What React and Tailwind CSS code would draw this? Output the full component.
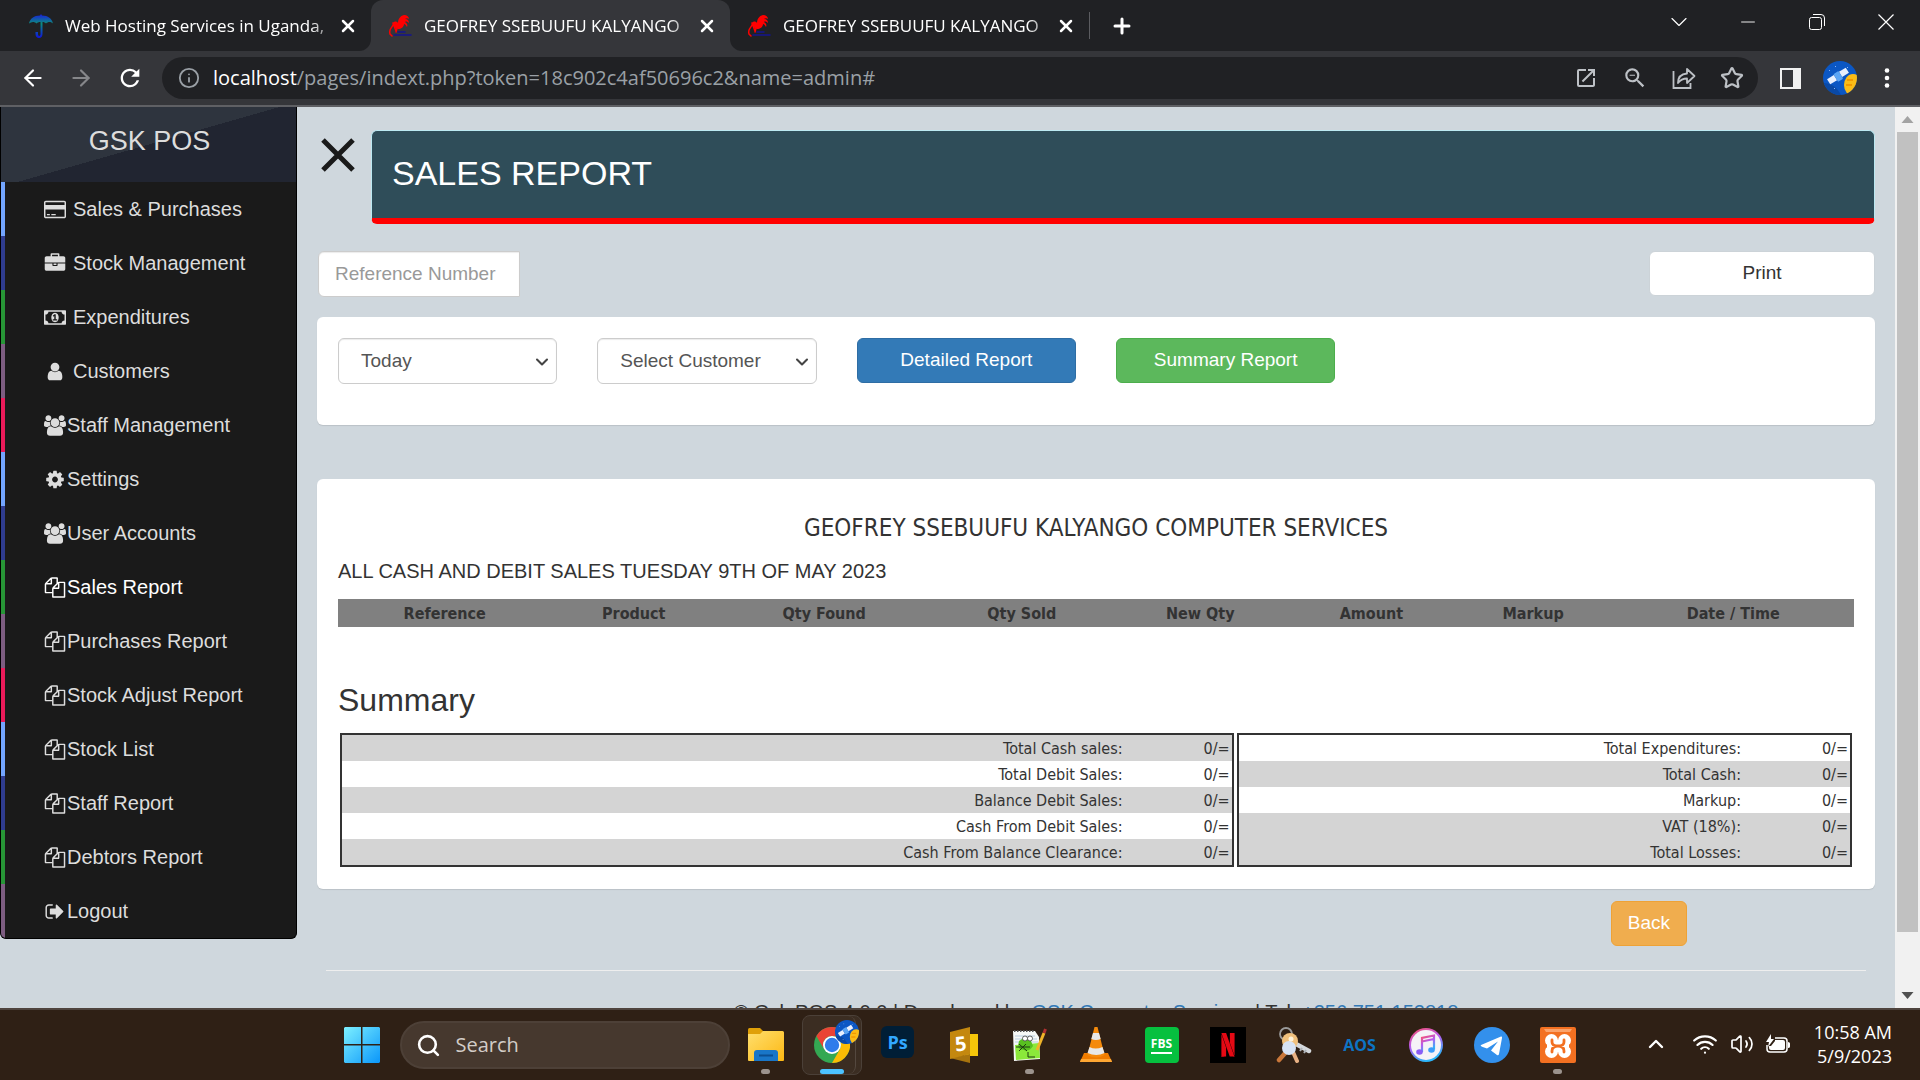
import React, { useState } from 'react';
import {
  ArrowLeft,
  ArrowRight,
  ChevronDown,
  ChevronUp,
  Info,
  Minus,
  Plus,
  Search,
  Star,
  Volume2,
  Wifi,
  X,
} from 'lucide-react';
import {
  MdOutlineOpenInNew,
  MdOutlineZoomOut,
  MdRefresh,
} from 'react-icons/md';
import { SiNetflix } from 'react-icons/si';

// Sidebar glyphs, drawn on the 1792 unit grid
const GLYPHS = {
  card: {
    box: '0 0 1920 1792',
    d: 'M1760 128q66 0 113 47t47 113v1216q0 66-47 113t-113 47h-1600q-66 0-113-47t-47-113v-1216q0-66 47-113t113-47h1600zm-1600 128q-13 0-22.5 9.5t-9.5 22.5v224h1664v-224q0-13-9.5-22.5t-22.5-9.5h-1600zm1600 1280q13 0 22.5-9.5t9.5-22.5v-608h-1664v608q0 13 9.5 22.5t22.5 9.5h1600zm-1504-128v-128h256v128h-256zm384 0v-128h384v128h-384z',
  },
  briefcase: {
    box: '-64 0 1920 1792',
    d: 'M640 256h512v-128h-512v128zm1152 640v480q0 66-47 113t-113 47h-1472q-66 0-113-47t-47-113v-480h672v160q0 26 19 45t45 19h320q26 0 45-19t19-45v-160h672zm-768 0v128h-256v-128h256zm768-480v384h-1792v-384q0-66 47-113t113-47h352v-160q0-40 28-68t68-28h576q40 0 68 28t28 68v160h352q66 0 113 47t47 113z',
  },
  money: {
    box: '0 0 1920 1792',
    d: 'M768 1152h384v-96h-128v-448h-114l-148 137 77 80q42-37 55-57h2v288h-128v96zm512-256q0 70-21 142t-59.5 134-101.5 101-138 39-138-39-101.5-101-59.5-134-21-142 21-142 59.5-134 101.5-101 138-39 138 39 101.5 101 59.5 134 21 142zm512 256v-512q-106 0-181-75t-75-181h-1152q0 106-75 181t-181 75v512q106 0 181 75t75 181h1152q0-106 75-181t181-75zm128-832v1152q0 26-19 45t-45 19h-1792q-26 0-45-19t-19-45v-1152q0-26 19-45t45-19h1792q26 0 45 19t19 45z',
  },
  user: {
    box: '-64 0 1920 1792',
    d: 'M1536 1399q0 109-62.5 187t-150.5 78h-854q-88 0-150.5-78t-62.5-187q0-85 8.5-160.5t31.5-152 58.5-131 94-89 134.5-34.5q131 128 313 128t313-128q76 0 134.5 34.5t94 89 58.5 131 31.5 152 8.5 160.5zm-256-887q0 159-112.5 271.5t-271.5 112.5-271.5-112.5-112.5-271.5 112.5-271.5 271.5-112.5 271.5 112.5 112.5 271.5z',
  },
  users: {
    box: '-64 0 1920 1792',
    d: 'M529 896q-162 5-265 128h-134q-82 0-138-40.5t-56-118.5q0-353 124-353 6 0 43.5 21t97.5 42.5 119 21.5q67 0 133-23-5 37-5 66 0 139 81 256zm1071 637q0 120-73 189.5t-194 69.5h-874q-121 0-194-69.5t-73-189.5q0-53 3.5-103.5t14-109 26.5-108.5 43-97.5 62-81 85.5-53.5 111.5-20q10 0 43 21.5t73 48 107 48 135 21.5 135-21.5 107-48 73-48 43-21.5q61 0 111.5 20t85.5 53.5 62 81 43 97.5 26.5 108.5 14 109 3.5 103.5zm-1024-1277q0 106-75 181t-181 75-181-75-75-181 75-181 181-75 181 75 75 181zm704 384q0 159-112.5 271.5t-271.5 112.5-271.5-112.5-112.5-271.5 112.5-271.5 271.5-112.5 271.5 112.5 112.5 271.5zm576 225q0 78-56 118.5t-138 40.5h-134q-103-123-265-128 81-117 81-256 0-29-5-66 66 23 133 23 59 0 119-21.5t97.5-42.5 43.5-21q124 0 124 353zm-128-609q0 106-75 181t-181 75-181-75-75-181 75-181 181-75 181 75 75 181z',
  },
  cog: {
    box: '-64 0 1920 1792',
    d: 'M1152 896q0-106-75-181t-181-75-181 75-75 181 75 181 181 75 181-75 75-181zm512-109v222q0 12-8 23t-20 13l-185 28q-19 54-39 91 35 50 107 138 10 12 10 25t-9 23q-27 37-99 108t-94 71q-12 0-26-9l-138-108q-44 23-91 38-16 136-29 186-7 28-36 28h-222q-14 0-24.5-8.5t-11.5-21.5l-28-184q-49-16-90-37l-141 107q-10 9-25 9-14 0-25-11-126-114-165-168-7-10-7-23 0-12 8-23 15-21 51-66.5t54-70.5q-27-50-41-99l-183-27q-13-2-21-12.5t-8-23.5v-222q0-12 8-23t19-13l186-28q14-46 39-92-40-57-107-138-10-12-10-24 0-10 9-23 26-36 98.5-107.5t94.5-71.5q13 0 26 10l138 107q44-23 91-38 16-136 29-186 7-28 36-28h222q14 0 24.5 8.5t11.5 21.5l28 184q49 16 90 37l142-107q9-9 24-9 13 0 25 10 129 119 165 170 7 8 7 22 0 12-8 23-15 21-51 66.5t-54 70.5q26 50 41 98l183 28q13 2 21 12.5t8 23.5z',
  },
  files: {
    box: '-64 0 1920 1792',
    d: 'M1696 384q40 0 68 28t28 68v1216q0 40-28 68t-68 28h-960q-40 0-68-28t-28-68v-288h-544q-40 0-68-28t-28-68v-672q0-40 20-88t48-76l408-408q28-28 76-48t88-20h416q40 0 68 28t28 68v328q68-40 128-40h416zm-544 213l-299 299h299v-299zm-640-384l-299 299h299v-299zm196 647l316-316v-416h-384v416q0 40-28 68t-68 28h-416v640h512v-256q0-40 20-88t48-76zm956 804v-1152h-384v416q0 40-28 68t-68 28h-416v640h896z',
  },
  signOut: {
    box: '-64 0 1920 1792',
    d: 'M704 1440q0 4 1 20t.5 26.5-3 23.5-10 19.5-20.5 6.5h-320q-119 0-203.5-84.5t-84.5-203.5v-704q0-119 84.5-203.5t203.5-84.5h320q13 0 22.5 9.5t9.5 22.5q0 4 1 20t.5 26.5-3 23.5-10 19.5-20.5 6.5h-320q-66 0-113 47t-47 113v704q0 66 47 113t113 47h312l11.5 1 11.5 3 8 5.5 7 9 2 13.5zm928-544q0 26-19 45l-544 544q-19 19-45 19t-45-19-19-45v-288h-448q-26 0-45-19t-19-45v-384q0-26 19-45t45-19h448v-288q0-26 19-45t45-19 45 19l544 544q19 19 19 45z',
  },
};

const MENU = [
  { label: 'Sales & Purchases', icon: 'card', stripe: 'border-[#73a5ff]', spaced: true },
  { label: 'Stock Management', icon: 'briefcase', stripe: 'border-[#2f3c8f]', spaced: true },
  { label: 'Expenditures', icon: 'money', stripe: 'border-[#279636]', spaced: true },
  { label: 'Customers', icon: 'user', stripe: 'border-[#7d5d81]', spaced: true },
  { label: 'Staff Management', icon: 'users', stripe: 'border-[#ec1b5a]' },
  { label: 'Settings', icon: 'cog', stripe: 'border-[#73a5ff]' },
  { label: 'User Accounts', icon: 'users', stripe: 'border-[#2f3c8f]' },
  { label: 'Sales Report', icon: 'files', stripe: 'border-[#279636]', active: true },
  { label: 'Purchases Report', icon: 'files', stripe: 'border-[#7d5d81]' },
  { label: 'Stock Adjust Report', icon: 'files', stripe: 'border-[#ec1b5a]' },
  { label: 'Stock List', icon: 'files', stripe: 'border-[#73a5ff]' },
  { label: 'Staff Report', icon: 'files', stripe: 'border-[#2f3c8f]' },
  { label: 'Debtors Report', icon: 'files', stripe: 'border-[#279636]' },
  { label: 'Logout', icon: 'signOut', stripe: 'border-[#7d5d81]' },
];

const COLUMNS = ['Reference', 'Product', 'Qty Found', 'Qty Sold', 'New Qty', 'Amount', 'Markup', 'Date / Time'];

const SALES_TOTALS = [
  { label: 'Total Cash sales:', value: '0/=', shaded: true },
  { label: 'Total Debit Sales:', value: '0/=' },
  { label: 'Balance Debit Sales:', value: '0/=', shaded: true },
  { label: 'Cash From Debit Sales:', value: '0/=' },
  { label: 'Cash From Balance Clearance:', value: '0/=', shaded: true },
];

const OTHER_TOTALS = [
  { label: 'Total Expenditures:', value: '0/=' },
  { label: 'Total Cash:', value: '0/=', shaded: true },
  { label: 'Markup:', value: '0/=' },
  { label: 'VAT (18%):', value: '0/=', shaded: true },
  { label: 'Total Losses:', value: '0/=', shaded: true },
];

const Umbrella = () => (
  <svg viewBox="0 0 24 24" className="h-6 w-6 shrink-0">
    <defs>
      <linearGradient id="umbrella" x1="0" y1="0" x2="0" y2="1">
        <stop offset="0" stopColor="#1a1ae0" />
        <stop offset="0.4" stopColor="#0c8f7c" />
        <stop offset="0.65" stopColor="#0b5ab0" />
        <stop offset="1" stopColor="#1010d8" />
      </linearGradient>
    </defs>
    <path fill="url(#umbrella)" d="M12 0l1 1.500c6 0 10 3 11 8-2-2-5-2-7 0-1-1-2-1.500-3.500-1.500V20c0 5.500-7 5.500-7 0v-2h2.500v2c0 2.500 2.500 2.500 2.500 0V8c-2 0-3 .5-4 1.500-2-2-5-2-7.500 0 1-5 5-8 11-8z" />
  </svg>
);

const Rooster = () => (
  <svg viewBox="0 0 24 24" className="h-6 w-6 shrink-0" fill="none" strokeLinecap="round">
    <path fill="#f00" d="M5 9c1-2 4-2 5 0 0-4 2-7 6-8 3 0 5 2 5 4-1-1-3-1-4 0 3 0 4 2 4 4-1-1-3-2-4-1 2 1 3 3 2 5-1-2-2-3-3-3 0 3-3 5-6 5-3-1-4-2-5-4z" />
    <path stroke="#f00" strokeWidth="1.500" d="M5 9c2 3-5 5-3 11l2 2M5 9l3 8M9 14l-1 4" />
    <path stroke="#15158f" strokeWidth="1.600" d="M6 21h17M10 18h7" />
  </svg>
);

const TABS = [
  { title: 'Web Hosting Services in Uganda,', icon: Umbrella },
  { title: 'GEOFREY SSEBUUFU KALYANGO', icon: Rooster, active: true },
  { title: 'GEOFREY SSEBUUFU KALYANGO', icon: Rooster },
];

const Avatar = ({ className }) => (
  <svg viewBox="0 0 34 34" className={className}>
    <defs>
      <clipPath id="avatar-round"><circle cx="17" cy="17" r="17" /></clipPath>
    </defs>
    <g clipPath="url(#avatar-round)">
      <rect width="34" height="34" fill="#0b57c4" />
      <path fill="#0a49a5" d="M0 22c8 0 14 4 18 12H0z" />
      <ellipse cx="30" cy="24" rx="9" ry="11" fill="#fbbc16" />
      <path stroke="#f29900" strokeWidth="2" d="M24 19h6M23 24h6" />
      <g transform="rotate(-32 15 15)">
        <rect x="4" y="12" width="8" height="6" fill="#e8f0fe" />
        <rect x="18" y="12" width="8" height="6" fill="#e8f0fe" />
        <rect x="12" y="11" width="6" height="9" rx="1" fill="#5aa5f5" />
      </g>
      <path fill="#8ab4f8" d="M6 9h1v1H6zM12 5h1v1h-1zM24 6h1v1h-1zM11 27h1v1h-1z" />
    </g>
  </svg>
);

const BrowserTabs = () => (
  <div className="flex h-[51px] items-stretch bg-[#202124] pl-3 text-[17px] text-white">
    {TABS.map((tab, i) => (
      <div
        key={i}
        className={`relative flex w-[359px] items-center pr-[13px] pl-[17px] ${
          tab.active ? 'rounded-t-xl bg-[#35363a]' : ''
        }`}
      >
        {tab.active && (
          <>
            <span className="absolute bottom-0 -left-3 h-3 w-3 bg-[#35363a]">
              <span className="block h-3 w-3 rounded-br-xl bg-[#202124]" />
            </span>
            <span className="absolute -right-3 bottom-0 h-3 w-3 bg-[#35363a]">
              <span className="block h-3 w-3 rounded-bl-xl bg-[#202124]" />
            </span>
          </>
        )}
        <tab.icon />
        <span className="ml-3 flex-1 mask-r-from-90% whitespace-nowrap">{tab.title}</span>
        <button aria-label="Close tab"><X className="h-5 w-5" strokeWidth={3} /></button>
      </div>
    ))}
    <span className="my-3 w-px bg-[#5b5c60]" />
    <button aria-label="New tab" className="ml-5"><Plus className="h-6 w-6" strokeWidth={3} /></button>
    <div className="mb-2 ml-auto flex">
      <button aria-label="Search tabs" className="flex w-[69px] items-center justify-center">
        <ChevronDown className="h-7 w-7" strokeWidth={1} />
      </button>
      <button aria-label="Minimize" className="flex w-[69px] items-center justify-center">
        <Minus className="h-[22px] w-[22px]" strokeWidth={1} />
      </button>
      <button aria-label="Restore" className="flex w-[69px] items-center justify-center">
        <svg viewBox="0 0 16 16" className="h-4 w-4" fill="none" stroke="white">
          <rect x="0.5" y="3.500" width="12" height="12" rx="2" />
          <path d="M4 .5h8a3.500 3.500 0 0 1 3.500 3.500v8" />
        </svg>
      </button>
      <button aria-label="Close" className="flex w-[69px] items-center justify-center">
        <svg viewBox="0 0 16 16" className="h-4 w-4" stroke="white" strokeWidth="1.2">
          <path d="M.5.5l15 15M15.500.5l-15 15" />
        </svg>
      </button>
    </div>
  </div>
);

const Toolbar = () => (
  <div className="flex items-center border-b-2 border-[#5f6064] bg-[#35363a] py-[6px] pr-[23px] pl-5 text-white">
    <div className="flex w-[142px] gap-[22px]">
      <button aria-label="Back"><ArrowLeft className="h-[26px] w-[26px]" /></button>
      <button aria-label="Forward"><ArrowRight className="h-[26px] w-[26px] text-[#86878a]" /></button>
      <button aria-label="Reload"><MdRefresh className="h-[28px] w-[28px]" /></button>
    </div>
    <div className="flex h-[42px] flex-1 items-center rounded-full bg-[#202124] pr-[14px] pl-4 text-[#bdc1c6]">
      <Info className="h-[22px] w-[22px] text-[#9aa0a6]" />
      <span className="ml-[13px] flex-1 text-xl text-[#9aa0a6]">
        <span className="text-white">localhost</span>/pages/indext.php?token=18c902c4af50696c2&amp;name=admin#
      </span>
      <div className="flex gap-6">
        <button aria-label="Open in new"><MdOutlineOpenInNew className="h-6 w-6" /></button>
        <button aria-label="Zoom"><MdOutlineZoomOut className="h-[26px] w-[26px]" /></button>
        <button aria-label="Share">
          <svg viewBox="0 0 24 24" className="h-6 w-6" fill="none" stroke="currentColor" strokeWidth="1.8">
            <path d="M1.500 5v17h17v-5" />
            <path d="M6 17c0-6 3-9 9-9.500V3l7.500 7-7.500 7v-4.500c-4 0-6.500 1.200-9 4.500z" strokeLinejoin="round" />
          </svg>
        </button>
        <button aria-label="Bookmark"><Star className="h-6 w-6" strokeWidth={2.2} /></button>
      </div>
    </div>
    <button aria-label="Side panel" className="ml-[22px] h-[21px] w-[21px] border-2 border-r-[8px] border-[#f1f1f1]" />
    <button aria-label="Profile" className="ml-[22px]"><Avatar className="h-[34px] w-[34px]" /></button>
    <button aria-label="Menu" className="ml-5 w-5">
      <svg viewBox="0 0 20 20" className="h-5 w-5" fill="white">
        <circle cx="10" cy="2.500" r="2.300" />
        <circle cx="10" cy="10" r="2.300" />
        <circle cx="10" cy="17.500" r="2.300" />
      </svg>
    </button>
  </div>
);

const Sidebar = () => (
  <nav className="w-[297px] shrink-0 self-start overflow-hidden rounded-b-md border border-t-0 border-black bg-[#1a1a1a] font-['Liberation_Sans',Arial,sans-serif]">
    <div className="h-[75px] bg-[linear-gradient(164deg,#2e343e_50%,#212531_50%)] pt-[14px] pl-[2px] text-center text-[27px] leading-10 text-[#ddd]">
      GSK POS
    </div>
    <ul>
      {MENU.map((item) => {
        const glyph = GLYPHS[item.icon];
        return (
          <li key={item.label}>
            <a
              href="#"
              className={`flex h-[54px] items-center border-l-4 pl-[39px] text-xl ${item.stripe} ${
                item.active ? 'text-white' : 'text-[#ddd]'
              }`}
            >
              <svg viewBox={glyph.box} className="mr-px h-[21px] w-[22px]" fill="currentColor">
                <path d={glyph.d} />
              </svg>
              <span className={item.spaced ? 'pl-[6px]' : ''}>{item.label}</span>
            </a>
          </li>
        );
      })}
    </ul>
  </nav>
);

const FilterSelect = ({ label, options }) => (
  <div className="relative px-5">
    <select
      aria-label={label}
      className="h-[46px] w-full appearance-none rounded-md border border-[#ccc] bg-white pl-[22px] text-[19px] text-[#555] shadow-[inset_0_1px_1px_rgba(0,0,0,0.08)]"
    >
      {options.map((option) => (
        <option key={option}>{option}</option>
      ))}
    </select>
    <ChevronDown className="pointer-events-none absolute top-[14px] right-[25px] h-5 w-5 text-[#444]" strokeWidth={2.5} />
  </div>
);

const TotalsTable = ({ rows, className }) => (
  <table className={`border-separate border-spacing-0 border-2 border-[#333] text-base ${className}`}>
    <tbody>
      {rows.map((row) => (
        <tr key={row.label} className={row.shaded ? 'bg-[#d4d4d4]' : ''}>
          <td className="h-[26px] pt-[2px] text-right leading-6">{row.label}</td>
          <td className="h-[26px] w-[109px] pt-[2px] pr-[2px] text-right leading-6">{row.value}</td>
        </tr>
      ))}
    </tbody>
  </table>
);

const Report = () => {
  const [reference, setReference] = useState('');

  return (
    <main className="min-w-0 flex-1 px-5 pt-[23px] font-['Liberation_Sans',Arial,sans-serif] text-[19px] text-[#333]">
      <div className="flex items-start">
        <button aria-label="Close report" className="mt-2 mr-4 ml-1 text-[#1a1a1a]">
          <svg viewBox="0 0 34 34" className="h-[34px] w-[34px]" stroke="currentColor" strokeWidth="5">
            <path d="M2 2l30 30M32 2L2 32" />
          </svg>
        </button>
        <div className="flex h-[94px] flex-1 items-center rounded-md border border-b-[6px] border-[#bce8f1] border-b-[#f00] bg-[#2f4d59] px-5 pb-[2px] text-[34px] text-white">
          SALES REPORT
        </div>
      </div>

      <div className="mt-[27px] ml-px flex justify-between">
        <input
          type="text"
          aria-label="Reference Number"
          placeholder="Reference Number"
          value={reference}
          onChange={(e) => setReference(e.target.value)}
          className="h-[46px] w-[202px] rounded-l-md border border-[#ccc] bg-white px-4 placeholder-[#999] shadow-[inset_0_1px_1px_rgba(0,0,0,0.08)]"
        />
        <button className="h-[45px] w-[226px] rounded-md border border-[#ccd3d8] bg-white">Print</button>
      </div>

      <section className="mt-5 h-[108px] rounded-md bg-white px-px pt-[21px] shadow-[0_1px_1px_rgba(0,0,0,0.1)]">
        <div className="grid grid-cols-6">
          <FilterSelect label="Period" options={['Today', 'Yesterday', 'This Month']} />
          <FilterSelect label="Customer" options={['Select Customer']} />
          <div className="px-5">
            <button className="h-[45px] w-full rounded-md border border-[#2e6da4] bg-[#337ab7] text-white">Detailed Report</button>
          </div>
          <div className="px-5">
            <button className="h-[45px] w-full rounded-md border border-[#4cae4c] bg-[#5cb85c] text-white">Summary Report</button>
          </div>
        </div>
      </section>

      <section className="mt-[54px] rounded-md bg-white px-[21px] pt-8 pb-[22px] shadow-[0_1px_1px_rgba(0,0,0,0.1)]">
        <h2 className="text-center font-['DejaVu_Sans_Condensed','Noto_Sans',sans-serif] text-2xl leading-[34px]">
          GEOFREY SSEBUUFU KALYANGO COMPUTER SERVICES
        </h2>
        <p className="mt-[10px] text-xl leading-8">ALL CASH AND DEBIT SALES TUESDAY 9TH OF MAY 2023</p>
        <table className="mt-3 w-full bg-[#808080] font-['DejaVu_Sans_Condensed','Noto_Sans',sans-serif] text-base">
          <thead>
            <tr>
              {COLUMNS.map((column) => (
                <th key={column} className="h-7 pt-[2px] leading-6">{column}</th>
              ))}
            </tr>
          </thead>
        </table>
        <h3 className="mt-[53px] text-[32px] leading-10">Summary</h3>
        <div className="mx-[2px] mt-[13px] flex gap-[3px] font-['DejaVu_Sans_Condensed','Noto_Sans',sans-serif]">
          <TotalsTable rows={SALES_TOTALS} className="w-[59.1%]" />
          <TotalsTable rows={OTHER_TOTALS} className="flex-1" />
        </div>
      </section>

      <div className="mt-3 flex justify-end pr-[188px]">
        <button className="h-[45px] rounded-md border border-[#eea236] bg-[#f0ad4e] px-4 text-white">Back</button>
      </div>

      <footer className="mx-[9px] mt-6 border-t border-[#eee] pt-[26px] text-center text-xl leading-[30px]">
        © Gsk POS 4.0.0 | Developed by{' '}
        <a href="#" className="text-[#337ab7]">GSK Computer Services</a> | Tel:{' '}
        <a href="#" className="text-[#337ab7]">+256 751 152818</a>
      </footer>
    </main>
  );
};

const Scrollbar = () => (
  <div className="flex w-[25px] shrink-0 flex-col items-center bg-[#f1f1f1]">
    <svg viewBox="0 0 25 25" className="h-[25px] w-[25px]"><path fill="#a3a3a3" d="M12.500 9l6 7h-12z" /></svg>
    <div className="w-[21px] flex-1"><div className="h-[94%] bg-[#c1c1c1]" /></div>
    <svg viewBox="0 0 25 25" className="h-[25px] w-[25px]"><path fill="#505050" d="M12.500 16l6-7h-12z" /></svg>
  </div>
);

const FolderIcon = () => (
  <svg viewBox="0 0 36 34" className="h-[34px] w-9">
    <defs>
      <linearGradient id="folder" x1="0" y1="0" x2="1" y2="1">
        <stop offset="0" stopColor="#ffdf6e" />
        <stop offset="1" stopColor="#fdb813" />
      </linearGradient>
    </defs>
    <path fill="#e0a008" d="M0 1.500Q0 0 1.500 0H12l3 3v5H0z" />
    <path fill="url(#folder)" d="M0 6h12l3-3h19.500Q36 3 36 4.500V32q0 1-1 1H1q-1 0-1-1z" />
    <path fill="#1976c8" d="M6 33V25q0-3 3-3h18q3 0 3 3v8z" />
    <path stroke="#0c4f92" strokeWidth="2" d="M11 27.500h14" />
  </svg>
);

const ChromeIcon = () => (
  <div className="relative -mx-[5px] flex h-[60px] w-[60px] items-center rounded-lg border border-[#4b4038] bg-[#3b2d22] pl-[11px]">
    <span className="absolute inset-y-0 right-[5px] w-2 rounded-r-lg border-r border-[#54483f]" />
    <svg viewBox="0 0 36 36" className="h-9 w-9">
      <circle cx="18" cy="18" r="18" fill="#34a853" />
      <path fill="#ea4335" d="M2.400 9A18 18 0 0 1 33.600 9H18a9 9 0 0 0-7.800 13.500z" />
      <path fill="#fbbc05" d="M33.600 9A18 18 0 0 1 18 36l7.800-13.500A9 9 0 0 0 18 9z" />
      <circle cx="18" cy="18" r="9" fill="white" />
      <circle cx="18" cy="18" r="7.200" fill="#2f7ceb" />
    </svg>
    <Avatar className="absolute top-1 right-[2px] h-6 w-6" />
  </div>
);

const PhotoshopIcon = () => (
  <span className="mb-[6px] flex h-8 w-[33px] items-center justify-center rounded-md bg-[#001e36] text-lg font-bold text-[#31a8ff]">Ps</span>
);

const NumberFiveIcon = () => (
  <svg viewBox="0 0 28 36" className="h-9 w-7">
    <path fill="#f5c60a" d="M14 7h14v22H14z" />
    <path fill="#a8740e" d="M0 31l20-4v9z" />
    <path fill="#c4880f" d="M0 5L20 0v27L0 32z" />
    <text x="5" y="24" fill="white" fontSize="20" fontWeight="bold" fontFamily="Open Sans" transform="rotate(-6 10 16)">5</text>
  </svg>
);

const NotepadIcon = () => (
  <svg viewBox="0 0 36 34" className="h-[34px] w-9">
    <path fill="#f6f8f6" d="M1 3l22 0 4 6 1 22-26 2z" />
    <path stroke="#555" strokeWidth="2" strokeDasharray="1.500 1.500" d="M2 3h20" />
    <path stroke="#b8cde0" d="M3 8h20M3 11h22M3 14h23" />
    <path fill="#8be83a" d="M3 17l24-2 1 15-24 2z" />
    <path fill="#58c020" d="M7 13q7-6 12 0l2 5q-4 6-9 4-8 0-5-9z" />
    <circle cx="13" cy="10.500" r="2.500" fill="white" stroke="#444" strokeWidth="0.800" />
    <circle cx="18" cy="10.500" r="2.500" fill="white" stroke="#444" strokeWidth="0.800" />
    <path fill="none" stroke="#1c3a10" d="M4 19h14M7 16l8 7M14 16l-7 7M16 24v5h7" />
    <path stroke="#f0b429" strokeWidth="3" d="M25 22l7-17" />
    <path stroke="#b03030" strokeWidth="3" d="M32 5l1.500-4" />
  </svg>
);

const VlcIcon = () => (
  <svg viewBox="0 0 32 36" className="h-9 w-8">
    <path fill="#f07c00" d="M4 26h24l4 9H0z" />
    <path fill="#ffa733" d="M1 32h30l1 3H0z" />
    <path fill="#f58a0c" d="M14.500 0h3l7 28q-8 5-17 0z" />
    <path fill="#e8e8e8" d="M13 6h6l1.700 6q-5 2-9.400 0zM9.500 20q6 3 13 0l2 6q-8 4-17 0z" />
  </svg>
);

const FbsIcon = () => (
  <span className="flex h-9 w-[34px] items-center justify-center rounded-sm bg-[#06c03f] text-[12px] font-bold text-white">
    <span className="border-b-2 border-white leading-4">FBS</span>
  </span>
);

const NetflixIcon = () => (
  <span className="flex h-9 w-9 items-center justify-center bg-black text-[#e50914]"><SiNetflix className="h-6 w-6" /></span>
);

const KeysIcon = () => (
  <svg viewBox="0 0 36 36" className="h-9 w-9">
    <circle cx="10" cy="7" r="6" fill="none" stroke="#9a9a9a" strokeWidth="1.800" />
    <path stroke="#c9773a" strokeWidth="4.500" strokeLinecap="round" d="M11 24l-8 9" />
    <path stroke="#e8b184" strokeWidth="4" strokeLinecap="round" d="M17 25l4 9" />
    <path stroke="#d5d8dc" strokeWidth="4.500" strokeLinecap="round" d="M20 17l13 7" />
    <path stroke="#aeb3b8" strokeWidth="2" d="M26 21l-2 3M30 23l-2 3" />
    <circle cx="14" cy="14" r="8" fill="#f0c07c" />
    <circle cx="13" cy="21" r="7" fill="#d7e3f5" />
    <circle cx="15" cy="12" r="2.500" fill="#fff3da" />
  </svg>
);

const AosIcon = () => <span className="text-base font-bold text-[#0d74c4]">AOS</span>;

const MusicIcon = () => (
  <svg viewBox="0 0 34 34" className="h-[34px] w-[34px]">
    <defs>
      <linearGradient id="music" x1="0" y1="0" x2="0.4" y2="1">
        <stop offset="0" stopColor="#fb5068" />
        <stop offset="0.500" stopColor="#b75bf0" />
        <stop offset="1" stopColor="#2bb6fa" />
      </linearGradient>
    </defs>
    <circle cx="17" cy="17" r="17" fill="url(#music)" />
    <circle cx="17" cy="17" r="15" fill="#f5f3f7" />
    <path fill="none" stroke="url(#music)" strokeWidth="2.200" d="M13 24V10l12-2.500v14M13 13.500L25 11" />
    <ellipse cx="10.500" cy="24" rx="3.300" ry="2.700" fill="#8a5cf5" />
    <ellipse cx="22.500" cy="22" rx="3.300" ry="2.700" fill="#3c9cf8" />
  </svg>
);

const TelegramIcon = () => (
  <svg viewBox="0 0 36 36" className="h-9 w-9">
    <circle cx="18" cy="18" r="18" fill="#3390ec" />
    <path fill="white" d="M7 18L27 9.500q1.500-.3 1 1.500L25 27q-.5 2-2 1l-6-4.500 7-9-11 7-5-1.800q-2.200-.9-1-1.700z" />
  </svg>
);

const XamppIcon = () => (
  <svg viewBox="0 0 36 36" className="h-9 w-9">
    <rect width="36" height="36" rx="2" fill="#f37021" />
    <path fill="#fba36b" d="M4 2h28l-2 3H6z" />
    <g fill="white">
      <circle cx="11.500" cy="13.500" r="6.500" />
      <circle cx="24.500" cy="13.500" r="6.500" />
      <circle cx="11.500" cy="24.500" r="6.500" />
      <circle cx="24.500" cy="24.500" r="6.500" />
      <rect x="6" y="13" width="24" height="12" />
    </g>
    <path fill="none" stroke="#f37021" strokeWidth="2.800" strokeLinecap="round" d="M12 13v2q0 4 6 4t6-4v-2M12 25v-1q0-5 6-5t6 5v1" />
    <path fill="#f37021" d="M3 19l4-2v4zM33 19l-4-2v4z" />
  </svg>
);

const APPS = [
  { name: 'File Explorer', icon: FolderIcon, marker: 'w-[9px] bg-[#9c938d]' },
  { name: 'Chrome', icon: ChromeIcon, marker: 'w-6 bg-[#4cc2ff]' },
  { name: 'Photoshop', icon: PhotoshopIcon },
  { name: 'Notes', icon: NumberFiveIcon },
  { name: 'Notepad++', icon: NotepadIcon, marker: 'w-[9px] bg-[#9c938d]' },
  { name: 'VLC', icon: VlcIcon },
  { name: 'FBS Trader', icon: FbsIcon },
  { name: 'Netflix', icon: NetflixIcon },
  { name: 'Keys', icon: KeysIcon },
  { name: 'AOS', icon: AosIcon },
  { name: 'iTunes', icon: MusicIcon },
  { name: 'Telegram', icon: TelegramIcon },
  { name: 'XAMPP', icon: XamppIcon, marker: 'w-[9px] bg-[#9c938d]' },
];

const Taskbar = () => (
  <div className="grid h-[72px] shrink-0 grid-cols-[1fr_auto_1fr] items-center border-t-2 border-[#4f443e] bg-[#2f2015] text-white">
    <div />
    <div className="flex items-center">
      <button aria-label="Start" className="ml-[14px]">
        <svg viewBox="0 0 36 36" className="h-9 w-9">
          <defs>
            <linearGradient id="start" gradientUnits="userSpaceOnUse" x1="0" y1="0" x2="36" y2="36">
              <stop offset="0" stopColor="#7df0ff" />
              <stop offset="1" stopColor="#0a96fa" />
            </linearGradient>
          </defs>
          <path fill="url(#start)" d="M1 0h16v17H0V1zM18.500 0H35l1 1v16H18.500zM0 18.500h17V36H1l-1-1zM18.500 18.500H36V35l-1 1H18.500z" />
        </svg>
      </button>
      <label className="ml-5 flex h-12 w-[330px] items-center rounded-full border-2 border-[#4d4037] bg-[#46382e] pl-[14px]">
        <Search className="h-[25px] w-[25px]" strokeWidth={2.5} />
        <input
          type="text"
          placeholder="Search"
          aria-label="Search"
          className="ml-[15px] w-[200px] bg-transparent text-xl placeholder-[#d3cdc8] outline-none"
        />
      </label>
      <div className="ml-[3px] flex">
        {APPS.map((app) => (
          <button key={app.name} aria-label={app.name} className="relative flex h-[60px] w-[66px] items-center justify-center">
            <app.icon />
            {app.marker && <span className={`absolute bottom-px h-[5px] rounded-full ${app.marker}`} />}
          </button>
        ))}
      </div>
    </div>
    <div className="flex items-center justify-end pr-7 pb-[2px]">
      <ChevronUp className="mr-6 h-6 w-6" strokeWidth={2.4} />
      <Wifi className="mr-3 h-[26px] w-[26px]" />
      <Volume2 className="mr-3 h-6 w-6" strokeWidth={1.7} />
      <svg viewBox="0 0 24 20" className="mr-6 h-5 w-6" fill="white">
        <path fill="none" stroke="white" strokeWidth="1.500" d="M9 4h9q3 0 3 3v8q0 3-3 3H4q-3 0-3-3V11" />
        <path d="M9 6h8q2 0 2 2v6q0 2-2 2H5q-2 0-2-2v-2h2l4-5zM22 8q2 0 2 1.500v3q0 1.500-2 1.500zM5 0L0 8h3l-1 5 6-8H5z" />
      </svg>
      <div className="text-right text-lg leading-6">
        <div>10:58 AM</div>
        <div>5/9/2023</div>
      </div>
    </div>
  </div>
);

const App = () => {
  return (
    <div className="flex h-screen flex-col overflow-hidden bg-[#cfd7dd] font-['Open_Sans','Noto_Sans',sans-serif]">
      <BrowserTabs />
      <Toolbar />
      <div className="flex min-h-0 flex-1 overflow-hidden">
        <Sidebar />
        <Report />
        <Scrollbar />
      </div>
      <Taskbar />
    </div>
  );
};

export default App;
